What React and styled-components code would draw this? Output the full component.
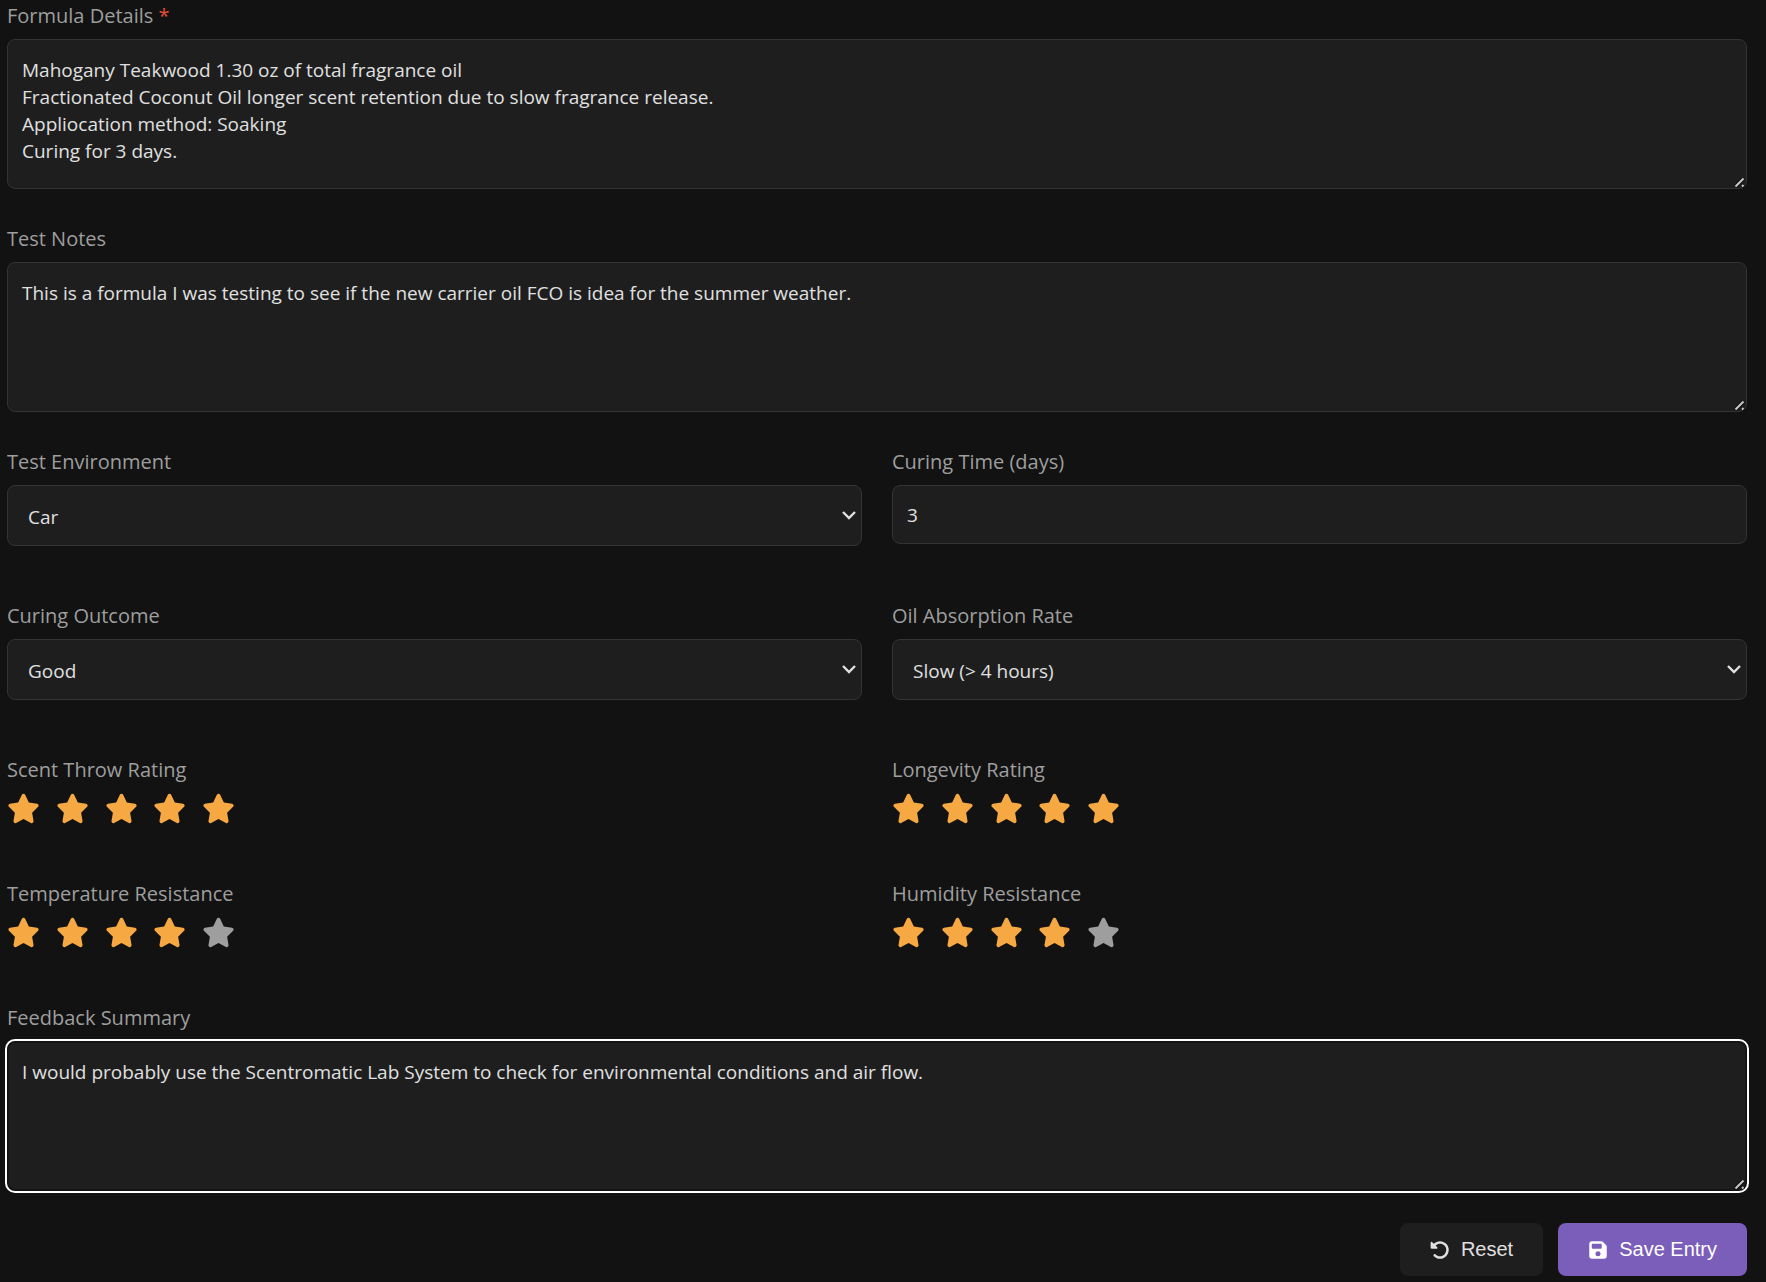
import React, { useId, useState } from "react";
import styled, { createGlobalStyle } from "styled-components";
import { FaFloppyDisk, FaRotateLeft, FaStar } from "react-icons/fa6";

const colors = {
    background: '#121212',
    surface: '#1e1e1e',
    border: '#333333',
    text: '#e0e0e0',
    label: '#9e9e9e',
    star: '#f6a943',
    primary: '#7b5dba',
    danger: '#e74c3c',
};

const fonts = {
    body: '"Segoe UI", "Open Sans", "Noto Sans", sans-serif',
    button: 'Arial, "Liberation Sans", sans-serif',
};

// two diagonal grip lines on a dark edge
const gripLines = "M4.5 13.5L12.5 5.5M11 13.5L12.5 12";
const grip = `url("data:image/svg+xml,%3Csvg xmlns='http://www.w3.org/2000/svg' width='15' height='15' fill='none'%3E%3Cpath d='${gripLines}' stroke='%23101010' stroke-width='4'/%3E%3Cpath d='${gripLines}' stroke='%23c8c8c8' stroke-width='2'/%3E%3C/svg%3E")`;

const GlobalStyle = createGlobalStyle`
    * {
        box-sizing: border-box;
    }
    body {
        margin: 0;
        background: ${colors.background};
        color: ${colors.text};
        font-family: ${fonts.body};
    }
`;

const Form = styled.form`
    display: flex;
    flex-direction: column;
    gap: 35px;
    padding: 1px 19px 6px 7px;
`;
const Grid = styled.div`
    display: grid;
    grid-template-columns: repeat(2, minmax(0, 1fr));
    align-items: start;
    gap: 55px 30px;
    margin-bottom: 20px;
`;
const FieldWrapper = styled.div`
    display: flex;
    flex-direction: column;
    gap: 8px;
`;
const Label = styled.label`
    color: ${colors.label};
    font-size: 20px;
    line-height: 30px;
`;
const Required = styled.span`
    color: ${colors.danger};
`;
const TextArea = styled.textarea`
    display: block;
    width: 100%;
    height: 150px;
    padding: 17px 14px;
    background: ${colors.surface};
    border: 1px solid ${colors.border};
    border-radius: 8px;
    color: ${colors.text};
    font-family: ${fonts.body};
    font-size: 19px;
    line-height: 27px;
    resize: vertical;

    &::-webkit-resizer {
        background: ${grip} no-repeat right bottom;
    }

    &:focus {
        border-color: #101010;
        outline: 2px solid #ffffff;
        box-shadow: inset 0 0 0 1px #161616;
    }
`;
const Input = styled.input`
    width: 100%;
    height: 59px;
    padding: 0 14px;
    background: ${colors.surface};
    border: 1px solid ${colors.border};
    border-radius: 8px;
    color: ${colors.text};
    font-family: ${fonts.body};
    font-size: 19px;
    appearance: textfield;

    &::-webkit-inner-spin-button {
        display: none;
    }
`;
const SelectWrapper = styled.div`
    display: grid;
    align-items: center;
`;
const Select = styled.select`
    grid-area: 1 / 1;
    width: 100%;
    height: 61px;
    padding: 2px 30px 0 20px;
    appearance: none;
    background: ${colors.surface};
    border: 1px solid ${colors.border};
    border-radius: 8px;
    color: ${colors.text};
    font-family: ${fonts.body};
    font-size: 19px;
`;
const Chevron = styled.svg`
    grid-area: 1 / 1;
    justify-self: end;
    width: 14px;
    height: 10px;
    margin-right: 6px;
    pointer-events: none;
    fill: none;
    stroke: ${colors.text};
    stroke-width: 2.4;
`;
const Stars = styled.div`
    display: flex;
    justify-content: space-between;
    width: 228px;
    height: 31px;
`;
const StarOption = styled.label`
    display: flex;
    width: 33px;
    height: 31px;
    color: ${props => props.$active ? colors.star : colors.label};
    cursor: pointer;

    svg {
        width: 33px;
        height: 31px;
    }
`;
const StarInput = styled.input`
    appearance: none;
    width: 0;
    height: 0;
    margin: 0;
`;
const Actions = styled.div`
    display: flex;
    justify-content: flex-end;
    gap: 15px;
    margin-top: -3px;
`;
const Button = styled.button`
    display: flex;
    align-items: center;
    gap: 11px;
    height: 53px;
    padding: 0 30px;
    background: ${props => props.$primary ? colors.primary : colors.surface};
    border: none;
    border-radius: 8px;
    color: ${props => props.$primary ? '#ffffff' : colors.text};
    font-family: ${fonts.button};
    font-size: 20px;
    cursor: pointer;

    svg {
        width: auto;
        height: 20px;
    }
`;

const initialValues = {
    formula: 'Mahogany Teakwood 1.30 oz of total fragrance oil\nFractionated Coconut Oil longer scent retention due to slow fragrance release.\nAppliocation method: Soaking\nCuring for 3 days.',
    notes: 'This is a formula I was testing to see if the new carrier oil FCO is idea for the summer weather.',
    environment: 'Car',
    curingTime: '3',
    outcome: 'Good',
    absorption: 'Slow (> 4 hours)',
    scentThrow: 5,
    longevity: 5,
    temperature: 4,
    humidity: 4,
    feedback: 'I would probably use the Scentromatic Lab System to check for environmental conditions and air flow.',
}

const environments = ['Car', 'Home', 'Office', 'Outdoor'];
const outcomes = ['Poor', 'Fair', 'Good', 'Excellent'];
const absorptionRates = ['Fast (< 1 hour)', 'Medium (1-4 hours)', 'Slow (> 4 hours)'];

function TextAreaField({ label, required, ...rest }) {
    const id = useId();

    return (
        <FieldWrapper>
            <Label htmlFor={id}>{label}{required && <Required> *</Required>}</Label>
            <TextArea id={id} required={required} {...rest} />
        </FieldWrapper>
    )
}

function SelectField({ label, options, ...rest }) {
    const id = useId();

    return (
        <FieldWrapper>
            <Label htmlFor={id}>{label}</Label>
            <SelectWrapper>
                <Select id={id} {...rest}>
                    {options.map(option => <option key={option} value={option}>{option}</option>)}
                </Select>
                <Chevron viewBox="0 0 14 10" aria-hidden="true"><path d="M1 1L7 7L13 1" /></Chevron>
            </SelectWrapper>
        </FieldWrapper>
    )
}

function RatingField({ label, value, onChange }) {
    const id = useId();

    return (
        <FieldWrapper>
            <Label as="span" id={id}>{label}</Label>
            <Stars role="radiogroup" aria-labelledby={id}>
                {[1, 2, 3, 4, 5].map(star => (
                    <StarOption key={star} $active={star <= value}>
                        <StarInput
                            type="radio"
                            name={id}
                            aria-label={`${star} of 5`}
                            checked={star === value}
                            onChange={() => onChange(star)}
                        />
                        <FaStar />
                    </StarOption>
                ))}
            </Stars>
        </FieldWrapper>
    )
}

function App() {
    const [values, setValues] = useState(initialValues);
    const curingId = useId();

    const setValue = (name, value) => setValues(prev => ({ ...prev, [name]: value }));

    const bind = name => ({
        value: values[name],
        onChange: e => setValue(name, e.target.value),
    });

    const bindRating = name => ({
        value: values[name],
        onChange: value => setValue(name, value),
    });

    return (
        <>
            <GlobalStyle />
            <Form onSubmit={e => e.preventDefault()}>
                <TextAreaField label="Formula Details" required {...bind('formula')} />
                <TextAreaField label="Test Notes" {...bind('notes')} />
                <Grid>
                    <SelectField label="Test Environment" options={environments} {...bind('environment')} />
                    <FieldWrapper>
                        <Label htmlFor={curingId}>Curing Time (days)</Label>
                        <Input id={curingId} type="number" min="0" {...bind('curingTime')} />
                    </FieldWrapper>
                    <SelectField label="Curing Outcome" options={outcomes} {...bind('outcome')} />
                    <SelectField label="Oil Absorption Rate" options={absorptionRates} {...bind('absorption')} />
                    <RatingField label="Scent Throw Rating" {...bindRating('scentThrow')} />
                    <RatingField label="Longevity Rating" {...bindRating('longevity')} />
                    <RatingField label="Temperature Resistance" {...bindRating('temperature')} />
                    <RatingField label="Humidity Resistance" {...bindRating('humidity')} />
                </Grid>
                <TextAreaField label="Feedback Summary" autoFocus {...bind('feedback')} />
                <Actions>
                    <Button type="button" onClick={() => setValues(initialValues)}><FaRotateLeft /> Reset</Button>
                    <Button type="submit" $primary><FaFloppyDisk /> Save Entry</Button>
                </Actions>
            </Form>
        </>
    )
}

export default App;
